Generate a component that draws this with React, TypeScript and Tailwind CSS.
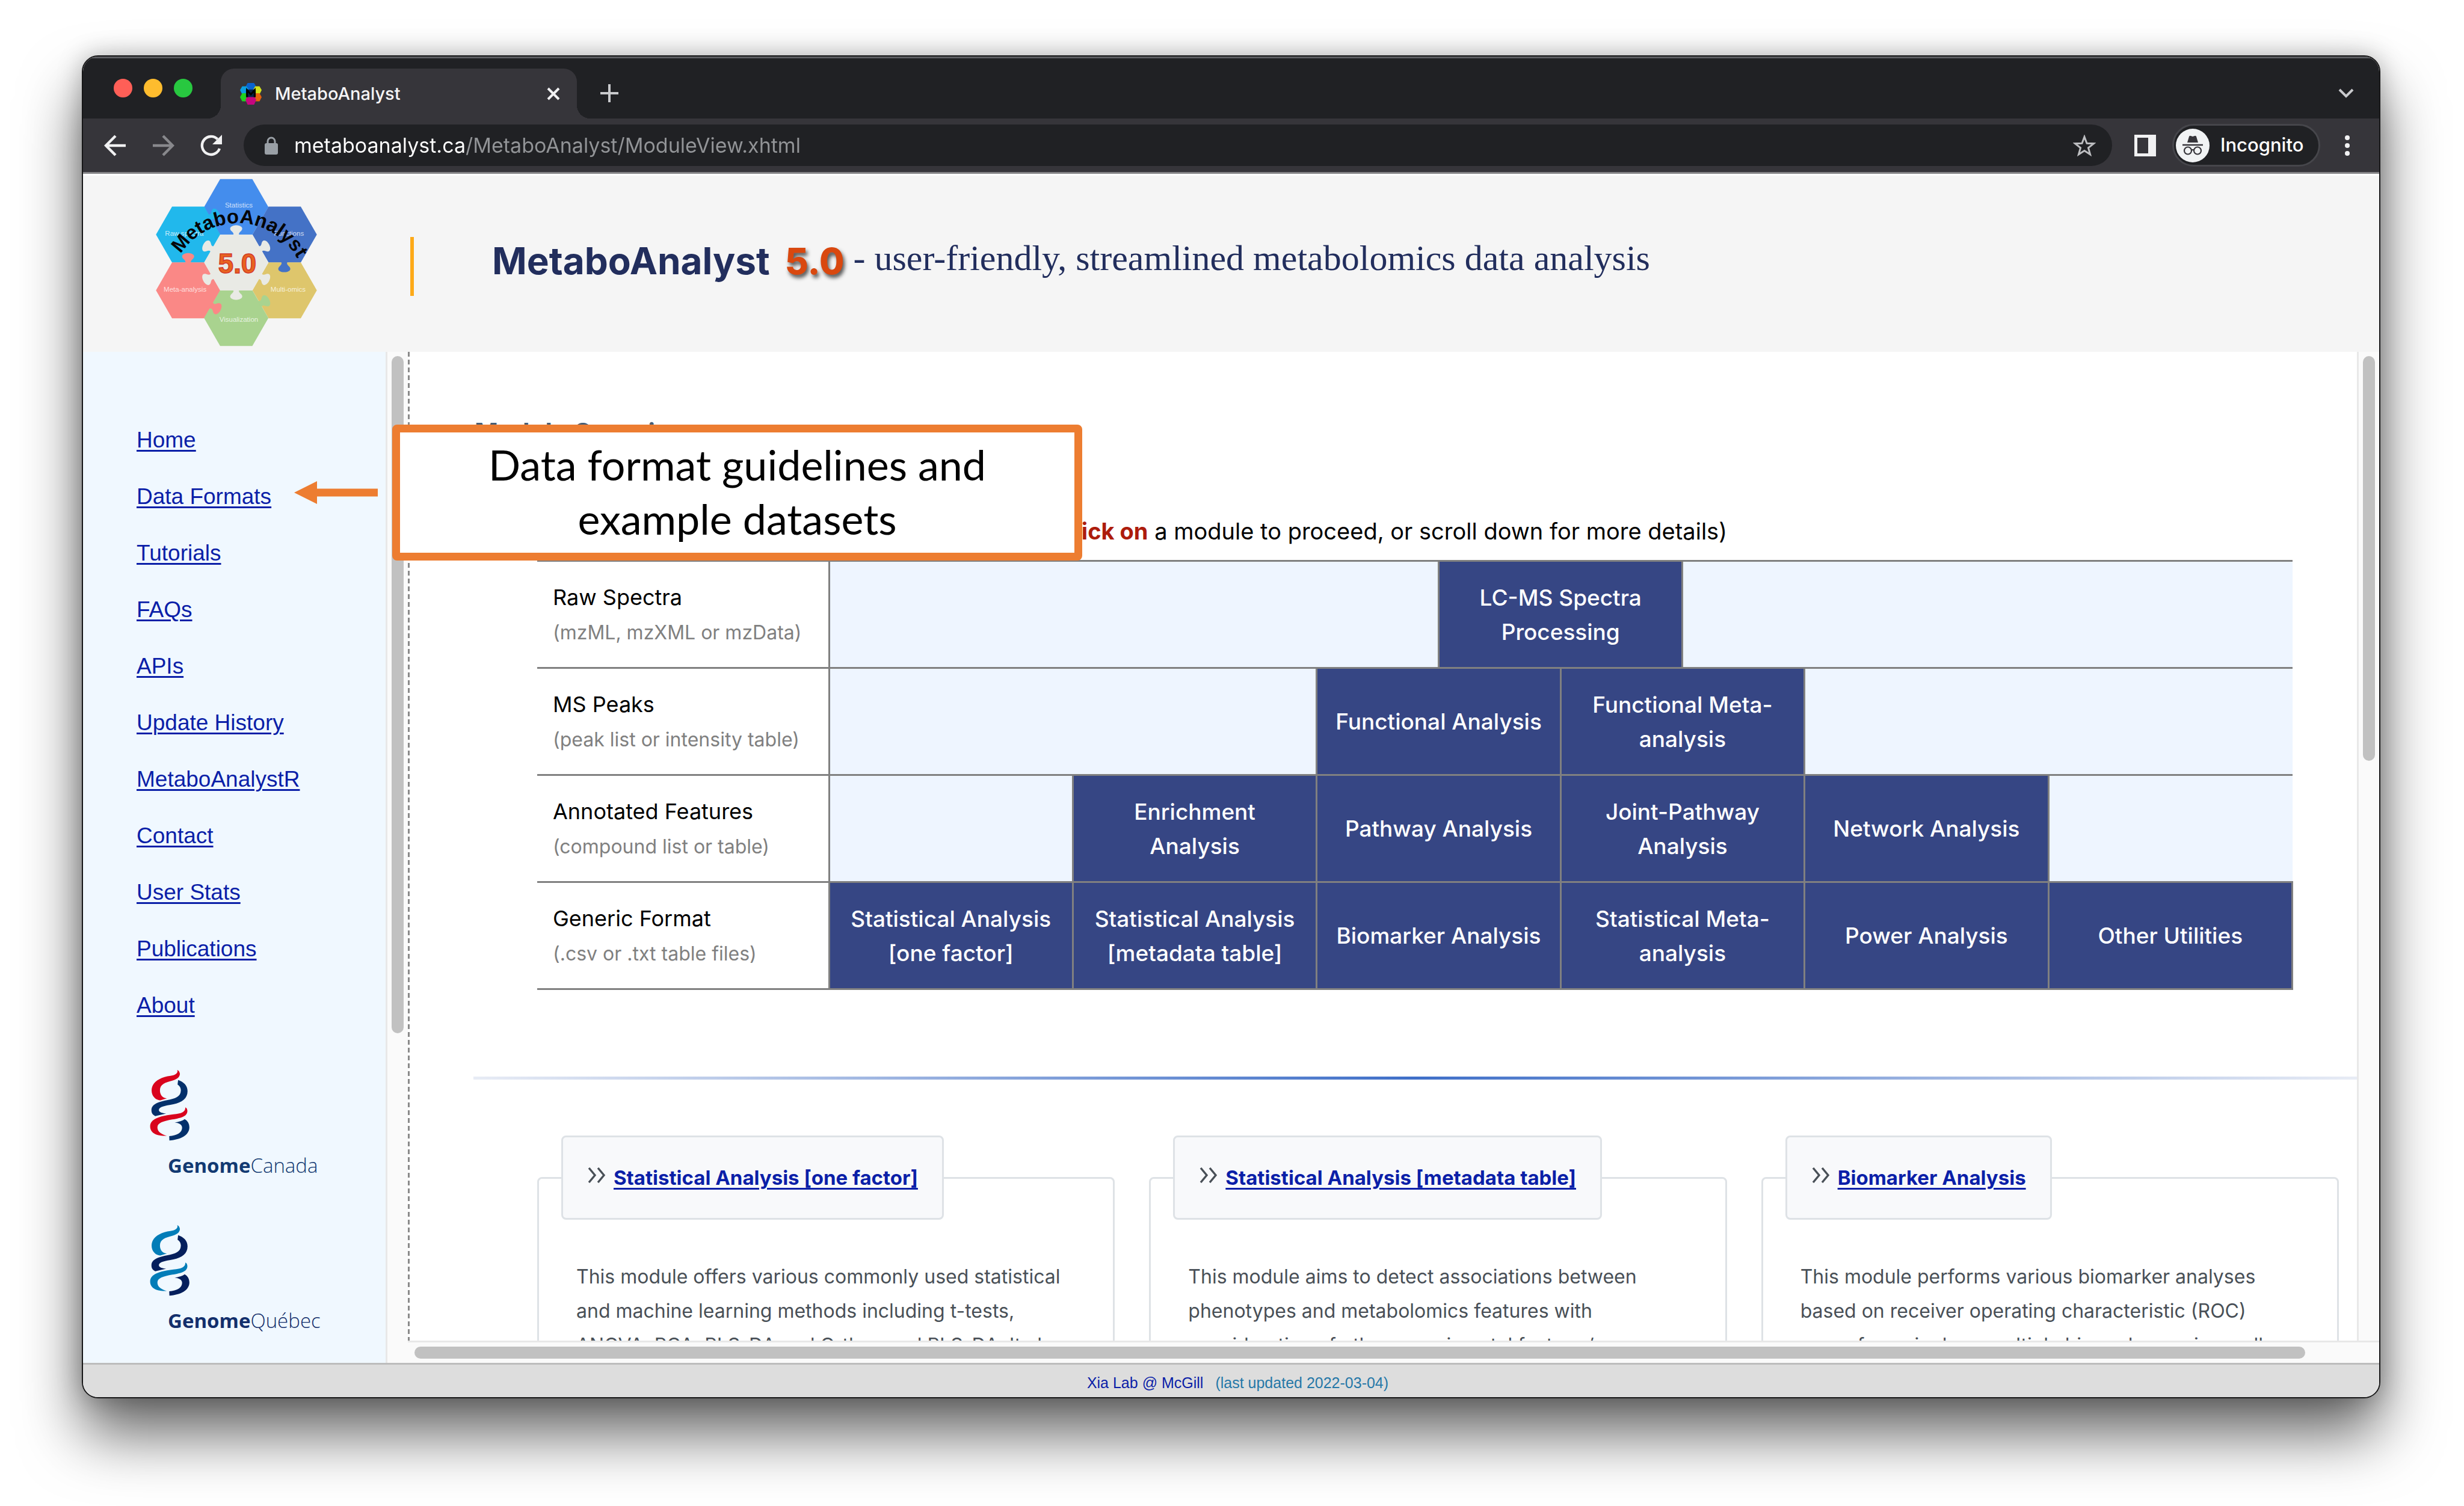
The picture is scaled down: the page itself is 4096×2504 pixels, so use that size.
import React from "react";

type Cell = { span: number; lines?: string[] };
type Row = { label: string; hint: string; cells: Cell[] };

const NAV = [
  "Home",
  "Data Formats",
  "Tutorials",
  "FAQs",
  "APIs",
  "Update History",
  "MetaboAnalystR",
  "Contact",
  "User Stats",
  "Publications",
  "About",
];

const ROWS: Row[] = [
  {
    label: "Raw Spectra",
    hint: "(mzML, mzXML or mzData)",
    cells: [{ span: 5 }, { span: 2, lines: ["LC-MS Spectra", "Processing"] }, { span: 5 }],
  },
  {
    label: "MS Peaks",
    hint: "(peak list or intensity table)",
    cells: [
      { span: 4 },
      { span: 2, lines: ["Functional Analysis"] },
      { span: 2, lines: ["Functional Meta-", "analysis"] },
      { span: 4 },
    ],
  },
  {
    label: "Annotated Features",
    hint: "(compound list or table)",
    cells: [
      { span: 2 },
      { span: 2, lines: ["Enrichment", "Analysis"] },
      { span: 2, lines: ["Pathway Analysis"] },
      { span: 2, lines: ["Joint-Pathway", "Analysis"] },
      { span: 2, lines: ["Network Analysis"] },
      { span: 2 },
    ],
  },
  {
    label: "Generic Format",
    hint: "(.csv or .txt table files)",
    cells: [
      { span: 2, lines: ["Statistical Analysis", "[one factor]"] },
      { span: 2, lines: ["Statistical Analysis", "[metadata table]"] },
      { span: 2, lines: ["Biomarker Analysis"] },
      { span: 2, lines: ["Statistical Meta-", "analysis"] },
      { span: 2, lines: ["Power Analysis"] },
      { span: 2, lines: ["Other Utilities"] },
    ],
  },
];

const CARDS = [
  {
    title: "Statistical Analysis [one factor]",
    lines: [
      "This module offers various commonly used statistical",
      "and machine learning methods including t-tests,",
      "ANOVA, PCA, PLS-DA and Orthogonal PLS-DA. It also",
    ],
  },
  {
    title: "Statistical Analysis [metadata table]",
    lines: [
      "This module aims to detect associations between",
      "phenotypes and metabolomics features with",
      "consideration of other experimental factors /",
    ],
  },
  {
    title: "Biomarker Analysis",
    lines: [
      "This module performs various biomarker analyses",
      "based on receiver operating characteristic (ROC)",
      "curve for a single or multiple biomarkers using well-",
    ],
  },
];

const HEX = "-176,0 -88,-153 88,-153 176,0 88,153 -88,153";

function Hex({ x, y, fill }: { x: number; y: number; fill: string }) {
  return <polygon points={HEX} transform={`translate(${x} ${y})`} fill={fill} />;
}

function Knob({ x, y, r, fill }: { x: number; y: number; r: number; fill: string }) {
  return (
    <g transform={`translate(${x} ${y}) rotate(${r})`} fill={fill}>
      <path d="M-22 6 C-10 -4 -14 -12 -26 -22 C-44 -40 -24 -54 0 -54 C24 -54 44 -40 26 -22 C14 -12 10 -4 22 6 Z" />
    </g>
  );
}

function SiteLogo() {
  return (
    <svg viewBox="40 28 882 916" className="mb-[5px] h-[279px] w-[268px]" role="img" aria-label="MetaboAnalyst 5.0">
      <Hex x={480} y={182} fill="#448ded" />
      <Hex x={217} y={333} fill="#21b8ec" />
      <Hex x={745} y={333} fill="#4472c6" />
      <Hex x={217} y={638} fill="#fa8886" />
      <Hex x={745} y={638} fill="#dec66c" />
      <Hex x={480} y={790} fill="#a9d38f" />
      <Hex x={480} y={486} fill="#e9eae5" />
      <Knob x={480} y={336} r={0} fill="#e9eae5" />
      <Knob x={480} y={636} r={180} fill="#e9eae5" />
      <Knob x={348} y={412} r={-62} fill="#e9eae5" />
      <Knob x={612} y={412} r={62} fill="#e9eae5" />
      <Knob x={348} y={562} r={242} fill="#e9eae5" />
      <Knob x={612} y={562} r={118} fill="#e9eae5" />
      <Knob x={217} y={488} r={0} fill="#fa8886" />
      <Knob x={743} y={485} r={180} fill="#4472c6" />
      <Knob x={346} y={722} r={118} fill="#fa8886" />
      <Knob x={612} y={712} r={62} fill="#a9d38f" />
      <Knob x={338} y={238} r={62} fill="#21b8ec" />
      <g fill="#ffffff" fillOpacity="0.75" fontFamily="Liberation Sans, sans-serif" fontSize="38" textAnchor="middle">
        <text x="494" y="185">Statistics</text>
        <text x="196" y="340">Raw spectra</text>
        <text x="768" y="340">Functions</text>
        <text x="200" y="647">Meta-analysis</text>
        <text x="764" y="647">Multi-omics</text>
        <text x="494" y="811">Visualization</text>
      </g>
      <path id="logo-arc" d="M176 440 A 372 372 0 0 1 822 480" fill="none" />
      <text fontFamily="Liberation Sans, sans-serif" fontWeight="700" fontSize="108" fill="#050608">
        <textPath href="#logo-arc" startOffset="0">MetaboAnalyst</textPath>
      </text>
      <text
        x="486"
        y="544"
        textAnchor="middle"
        fontFamily="Liberation Sans, sans-serif"
        fontWeight="700"
        fontSize="150"
        fill="#e8641f"
        stroke="#d23a2c"
        strokeWidth="5"
      >
        5.0
      </text>
    </svg>
  );
}

function Favicon() {
  return (
    <svg viewBox="0 0 40 40" className="h-9 w-9 shrink-0" aria-hidden="true">
      <polygon points="14,0 26,0 31,9 26,17 14,17 9,9" fill="#0a63cf" />
      <polygon points="4,6 12,6 17,13 12,21 4,21 0,13" fill="#0b9fe0" />
      <polygon points="28,6 36,6 40,13 36,21 28,21 24,13" fill="#d3e21a" />
      <polygon points="4,19 12,19 17,26 12,34 4,34 0,26" fill="#1fd11f" />
      <polygon points="28,19 36,19 40,26 36,34 28,34 24,26" fill="#e8610c" />
      <polygon points="14,24 26,24 30,31 26,40 14,40 10,31" fill="#c6067f" />
      <rect x="11" y="12" width="18" height="14" fill="#06204a" />
      <path d="M13 26V13l7 8 7-8v13" fill="none" stroke="#000" strokeWidth="3.4" />
    </svg>
  );
}

function Helix({ a, b }: { a: string; b: string }) {
  return (
    <svg viewBox="66 44 222 390" className="h-[118px] w-[67px]" aria-hidden="true">
      <path d="M217 44 C224 60 208 72 180 76 C120 84 76 112 76 155 C76 188 98 210 124 211 L160 200 C136 198 122 180 122 156 C122 122 150 112 190 102 C226 94 236 72 230 58 C228 50 222 44 217 44 Z" fill={a} />
      <path d="M222 99 C252 108 274 130 274 160 C274 200 244 222 196 232 C150 240 116 246 116 264 C116 276 134 282 156 284 L96 298 C80 290 75 280 75 264 C75 232 112 220 160 210 C208 202 236 190 237 158 C238 140 228 130 219 124 Z" fill={b} />
      <path d="M262 250 C262 276 240 284 196 288 C130 296 68 310 68 354 C68 392 104 408 160 406 C130 398 108 384 108 360 C108 334 140 326 190 316 C240 308 274 298 273 268 C272 258 268 252 262 250 Z" fill={a} />
      <path d="M258 314 C276 324 284 340 284 360 C284 402 236 428 174 432 L173 408 C216 406 244 388 244 362 C244 344 226 336 203 333 C226 328 246 324 258 314 Z" fill={b} />
    </svg>
  );
}

function Sponsor({ name, a, b, ink }: { name: string; a: string; b: string; ink: string }) {
  return (
    <a href="#" className="block pl-[111px]" style={{ color: ink }}>
      <Helix a={a} b={b} />
      <span className="mt-[16px] block pl-[30px] font-['Open_Sans',sans-serif] text-[33px] leading-[50px]">
        <span className="font-bold">Genome</span>
        <span className="font-light">{name}</span>
      </span>
    </a>
  );
}

function TabStrip() {
  return (
    <div className="flex h-[103px] items-end border-t-[3px] border-[#5d5e62] bg-[#202124] pl-[51px] pr-[42px]">
      <div className="mb-[35px] flex gap-[19px]">
        <button aria-label="Close window" className="size-[31px] rounded-full bg-[#ff5f57]" />
        <button aria-label="Minimise window" className="size-[31px] rounded-full bg-[#febc2e]" />
        <button aria-label="Zoom window" className="size-[31px] rounded-full bg-[#28c840]" />
      </div>
      <div className="relative ml-[47px] flex h-[83px] w-[592px] items-center rounded-t-[22px] bg-[#36353a] pl-8 pr-7">
        <span className="absolute -left-[22px] bottom-0 size-[22px] bg-[radial-gradient(circle_at_0_0,#202124_22px,#36353a_22px)]" />
        <span className="absolute -right-[22px] bottom-0 size-[22px] bg-[radial-gradient(circle_at_100%_0,#202124_22px,#36353a_22px)]" />
        <Favicon />
        <span className="ml-[22px] flex-1 text-[29px] leading-10 font-medium text-[#f4f4f5]">MetaboAnalyst</span>
        <button aria-label="Close tab">
          <svg viewBox="0 0 22 22" className="size-[22px]">
            <path d="M2 2 20 20M20 2 2 20" stroke="#f1f1f2" strokeWidth="4" />
          </svg>
        </button>
      </div>
      <button aria-label="New tab" className="mb-[27px] ml-[39px]">
        <svg viewBox="0 0 30 30" className="size-[30px]">
          <path d="M15 0V30M0 15H30" stroke="#c9cacd" strokeWidth="4" />
        </svg>
      </button>
      <button aria-label="Search tabs" className="mb-[33px] ml-auto">
        <svg viewBox="0 0 26 18" className="h-[18px] w-[26px]">
          <path d="M2 3 13 14 24 3" fill="none" stroke="#c9cacd" strokeWidth="4" />
        </svg>
      </button>
    </div>
  );
}

function IncognitoIcon() {
  return (
    <svg viewBox="0 0 56 56" className="size-14" aria-hidden="true">
      <circle cx="28" cy="28" r="28" fill="#f1f3f4" />
      <path d="M19 23 22 13 Q23 11 25 12 L28 13 31 12 Q33 11 34 13 L37 23Z" fill="#36353a" />
      <path d="M11 27H45" stroke="#36353a" strokeWidth="2.6" />
      <circle cx="20" cy="36.5" r="6" fill="none" stroke="#36353a" strokeWidth="2.2" />
      <circle cx="36" cy="36.5" r="6" fill="none" stroke="#36353a" strokeWidth="2.2" />
      <path d="M26 36 Q28 34 30 36" fill="none" stroke="#36353a" strokeWidth="2" />
    </svg>
  );
}

function Toolbar() {
  return (
    <div className="flex h-[92px] items-center border-b-[3px] border-[#858587] bg-[#36353a] pl-[35px] pr-[49px]">
      <button aria-label="Back">
        <svg viewBox="0 0 36 36" className="size-9">
          <path d="M36 18H4M19 2 3 18 19 34" fill="none" stroke="#f1f1f2" strokeWidth="4.4" />
        </svg>
      </button>
      <button aria-label="Forward" className="ml-[45px]">
        <svg viewBox="0 0 36 36" className="size-9">
          <path d="M0 18H32M17 2 33 18 17 34" fill="none" stroke="#88888c" strokeWidth="4.4" />
        </svg>
      </button>
      <button aria-label="Reload" className="ml-[43px]">
        <svg viewBox="0 0 36 36" className="size-9">
          <path d="M32 23 A15 15 0 1 1 28.6 7.4" fill="none" stroke="#f1f1f2" strokeWidth="4.4" />
          <path d="M36 0V16H20Z" fill="#f1f1f2" />
        </svg>
      </button>
      <div className="ml-[36px] flex h-[69px] flex-1 items-center rounded-full bg-[#202124] pl-[35px] pr-[27px]">
        <svg viewBox="0 0 22 30" className="h-[30px] w-[22px]" aria-hidden="true">
          <rect y="11" width="22" height="19" rx="3" fill="#9aa0a6" />
          <path d="M5 12V8a6 6 0 0 1 12 0v4" fill="none" stroke="#9aa0a6" strokeWidth="3" />
        </svg>
        <input
          aria-label="Address"
          defaultValue="metaboanalyst.ca/MetaboAnalyst/ModuleView.xhtml"
          className="ml-[27px] h-[50px] min-w-0 flex-1 bg-[linear-gradient(90deg,#ffffff_285px,#929497_285px)] bg-clip-text text-[34px] text-transparent outline-none"
        />
        <button aria-label="Bookmark this tab">
          <svg viewBox="0 0 38 36" className="h-9 w-[38px]">
            <path
              d="M19 3.5 23 14.2 34.5 14.7 25.5 21.8 28.6 32.8 19 26.5 9.4 32.8 12.5 21.8 3.5 14.7 15 14.2Z"
              fill="none"
              stroke="#bdbec1"
              strokeWidth="3"
            />
          </svg>
        </button>
      </div>
      <button aria-label="Side panel" className="ml-[37px] flex size-9 border-[5px] border-[#f1f1f2]">
        <span className="ml-auto h-full w-[8px] bg-[#f1f1f2]" />
      </button>
      <button className="ml-[27px] flex h-[71px] w-[246px] items-center rounded-full border-[3px] border-[#46464b] bg-[#202124] pl-[3px]">
        <IncognitoIcon />
        <span className="ml-[18px] text-[31px] font-medium text-white">Incognito</span>
      </button>
      <button aria-label="Menu" className="ml-[41px] flex flex-col gap-[5px]">
        <span className="size-2 rounded-full bg-[#f1f1f2]" />
        <span className="size-2 rounded-full bg-[#f1f1f2]" />
        <span className="size-2 rounded-full bg-[#f1f1f2]" />
      </button>
    </div>
  );
}

function PageHeader() {
  return (
    <header className="flex h-[296px] items-center border-t-[3px] border-white bg-[#f5f5f5] pl-[121px]">
      <SiteLogo />
      <span className="mt-[8px] ml-[155px] h-[98px] w-[6px] bg-[#fdaa19]" />
      <h1 className="mb-[10px] ml-[130px] flex items-center text-[#222e5d]">
        <span className="text-[62px] leading-[80px] font-bold">MetaboAnalyst</span>
        <span className="ml-[25px] text-[60px] leading-[80px] font-extrabold text-[#d9480f] [text-shadow:3px_5px_6px_rgba(30,30,30,0.75)]">
          5.0
        </span>
        <span className="ml-[15px] pb-[10px] font-['Liberation_Serif',serif] text-[60px] leading-[80px] font-normal">
          - user-friendly, streamlined metabolomics data analysis
        </span>
      </h1>
    </header>
  );
}

function Sidebar() {
  return (
    <nav className="flex w-[503px] shrink-0 flex-col bg-[#f0f8ff] pt-[100px]">
      <ul>
        {NAV.map((item) => (
          <li key={item} className="h-[94px] pl-[89px]">
            <a
              href="#"
              className="font-['Liberation_Sans',sans-serif] text-[37px] leading-[94px] text-[#0b1fa8] underline decoration-[3px] underline-offset-[4px]"
            >
              {item}
            </a>
          </li>
        ))}
      </ul>
      <div className="mt-[60px] flex flex-col gap-[74px]">
        <Sponsor name="Canada" a="#d9041d" b="#03306b" ink="#123a72" />
        <Sponsor name="Québec" a="#027db8" b="#051f5c" ink="#132f6c" />
      </div>
    </nav>
  );
}

function ModuleTable() {
  return (
    <table className="w-full table-fixed border-collapse">
      <colgroup>
        <col className="w-[485px]" />
        {Array.from({ length: 12 }, (_, i) => (
          <col key={i} />
        ))}
      </colgroup>
      <tbody>
        {ROWS.map((row) => (
          <tr key={row.label} className="h-[178px]">
            <th scope="row" className="border-y-[3px] border-r-[3px] border-[#808080] pl-[26px] text-left align-middle font-normal">
              <span className="block text-[36px] leading-[60px] text-black">{row.label}</span>
              <span className="block text-[32px] leading-[58px] text-[#808080]">{row.hint}</span>
            </th>
            {row.cells.map((cell, i) =>
              cell.lines ? (
                <td key={i} colSpan={cell.span} className="border-[3px] border-[#808080] bg-[#364684] p-0 text-center align-middle">
                  <button className="text-[37px] leading-[57px] font-medium text-white">
                    {cell.lines.map((line) => (
                      <span key={line} className="block">
                        {line}
                      </span>
                    ))}
                  </button>
                </td>
              ) : (
                <td key={i} colSpan={cell.span} className="border-y-[3px] border-[#808080] bg-[#eef5ff]" />
              ),
            )}
          </tr>
        ))}
      </tbody>
    </table>
  );
}

function Cards() {
  return (
    <div className="ml-[212px] mr-[30px] mt-[93px] grid grid-cols-3 gap-[57px]">
      {CARDS.map((card) => (
        <fieldset key={card.title} className="h-[560px] min-w-0 rounded-[8px] border-[3px] border-[#dee2e6] pl-[62px]">
          <legend className="-ml-[25px] flex h-[140px] items-center rounded-[8px] border-[3px] border-[#dee2e6] bg-[#f8f9fb] px-[40px]">
            <svg viewBox="0 0 32 26" className="mb-2 h-[26px] w-8" aria-hidden="true">
              <path d="M3 1 13 13 3 25M18 1 28 13 18 25" fill="none" stroke="#495057" strokeWidth="3.4" />
            </svg>
            <a href="#" className="ml-[12px] text-[33px] leading-[50px] font-bold whitespace-nowrap text-[#0b1fa8] underline decoration-[3px] underline-offset-[5px]">
              {card.title}
            </a>
          </legend>
          <p className="pt-[66px] text-[32px] leading-[57px] whitespace-nowrap text-[#495057]">
            {card.lines.map((line) => (
              <span key={line} className="block">
                {line}
              </span>
            ))}
          </p>
        </fieldset>
      ))}
    </div>
  );
}

function Callout() {
  return (
    <>
      <svg viewBox="0 0 139 38" className="absolute left-[351px] top-[215px] h-[38px] w-[139px]" aria-hidden="true">
        <path d="M0 19 38 0V12.5H139V25.5H38V38Z" fill="#ed7d31" />
      </svg>
      <div className="absolute left-[514px] top-[121px] flex h-[226px] w-[1147px] items-center justify-center rounded-[8px] border-[13px] border-[#ed7d31] bg-white text-center font-['Lato',sans-serif] text-[70px] leading-[90px] text-black">
        <p className="pb-1">
          Data format guidelines and
          <br />
          example datasets
        </p>
      </div>
    </>
  );
}

export default function App() {
  return (
    <div className="flex h-screen flex-col bg-white pt-[92px] pr-[139px] pb-[179px] pl-[136px] font-['Inter',sans-serif]">
      <div className="flex min-h-0 flex-1 flex-col overflow-hidden rounded-[27px] border-2 border-[#161617] bg-white shadow-[0_60px_100px_rgba(0,0,0,0.6),0_0_40px_rgba(0,0,0,0.25)]">
        <TabStrip />
        <Toolbar />
        <PageHeader />
        <div className="relative flex min-h-0 flex-1">
          <Sidebar />
          <div className="w-[37px] shrink-0 border-l-[3px] border-[#e8e8e8] bg-[#fafafa] pl-[7px] pt-[7px]">
            <div className="h-[1126px] w-5 rounded-full bg-[#c1c1c1]" />
          </div>
          <div className="flex min-w-0 flex-1 flex-col">
            <div className="flex min-h-0 flex-1">
              <span className="w-[3px] shrink-0 bg-[repeating-linear-gradient(180deg,#8a8a8a_0_8px,#ffffff_8px_13px)]" />
              <main className="min-h-0 min-w-0 flex-1 overflow-hidden pt-[109px]">
                <h2 className="pl-[108px] text-[42px] leading-[50px] font-bold text-[#475e75]">Module Overview</h2>
                <p className="mt-[114px] pr-[1047px] text-right text-[38px] leading-[50px] text-black">
                  (<strong className="font-bold text-[#ad1c0c]">Click on</strong> a module to proceed, or scroll down for more
                  details)
                </p>
                <div className="ml-[212px] mr-[106px] mt-[23px]">
                  <ModuleTable />
                </div>
                <hr className="ml-[106px] mt-[144px] h-[5px] border-0 bg-[linear-gradient(90deg,#e8ecf5,#3f6fc8_50%,#e8ecf5)]" />
                <Cards />
              </main>
              <div className="flex w-[37px] shrink-0 justify-center border-l-[3px] border-[#e8e8e8] bg-[#fafafa] pt-[7px]">
                <div className="h-[673px] w-5 rounded-full bg-[#c1c1c1]" />
              </div>
            </div>
            <div className="flex h-[37px] shrink-0 items-center border-t-[3px] border-[#e8e8e8] bg-[#fafafa] pl-[11px] pr-[123px]">
              <div className="h-5 w-full rounded-full bg-[#c1c1c1]" />
            </div>
          </div>
          <Callout />
        </div>
        <footer className="flex h-[57px] shrink-0 items-center justify-center gap-[20px] border-t-[3px] border-[#bcbcbc] bg-[#dddddd] pt-[8px] pl-[22px] font-['Liberation_Sans',sans-serif] text-[25px]">
          <a href="#" className="text-[#0b1fa8]">
            Xia Lab @ McGill
          </a>
          <span className="text-[#2678a8]">(last updated 2022-03-04)</span>
        </footer>
      </div>
    </div>
  );
}
